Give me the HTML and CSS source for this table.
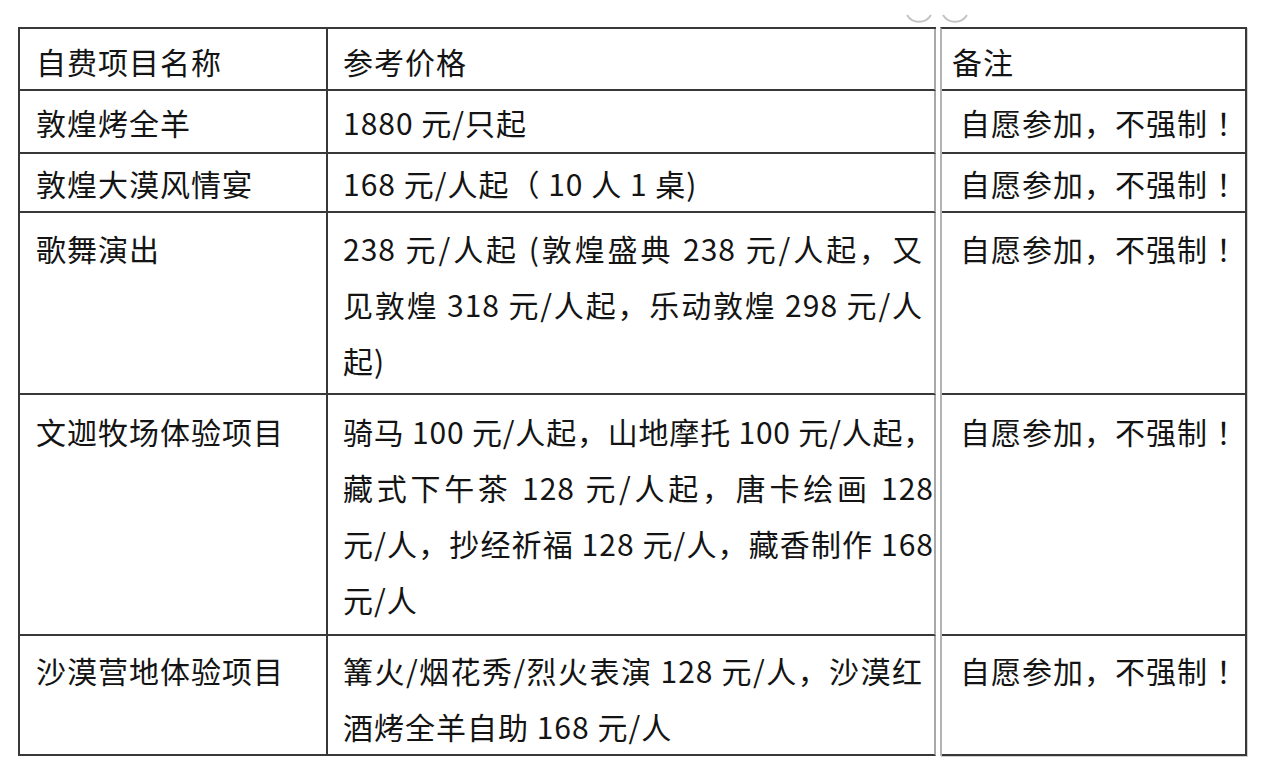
FILE: index.html
```html
<!DOCTYPE html>
<html lang="zh-CN">
<head>
<meta charset="utf-8">
<title>自费项目</title>
<link rel="stylesheet" href="styles.css">
</head>
<body>
<div class="page">
  <svg class="handles" width="80" height="28" viewBox="0 0 80 28" aria-hidden="true">
    <path d="M7 15 A14 14 0 0 0 31 15" />
    <path d="M43 15 A14 14 0 0 0 67 15" />
  </svg>
  <div class="tables">
    <table class="t main">
      <tr class="rh">
        <td class="c1">自费项目名称</td>
        <td class="c2">参考价格</td>
      </tr>
      <tr class="r1">
        <td class="c1">敦煌烤全羊</td>
        <td class="c2">1880 元/只起</td>
      </tr>
      <tr class="r2">
        <td class="c1">敦煌大漠风情宴</td>
        <td class="c2">168 元/人起（ 10 人 1 桌)</td>
      </tr>
      <tr class="r3">
        <td class="c1">歌舞演出</td>
        <td class="c2">
          <span class="ln j">238 元/人起 (敦煌盛典 238 元/人起，又</span>
          <span class="ln j">见敦煌 318 元/人起，乐动敦煌 298 元/人</span>
          <span class="ln">起)</span>
        </td>
      </tr>
      <tr class="r4">
        <td class="c1">文迦牧场体验项目</td>
        <td class="c2">
          <span class="ln j over tight">骑马 100 元/人起，山地摩托 100 元/人起，</span>
          <span class="ln j over">藏式下午茶 128 元/人起，唐卡绘画 128</span>
          <span class="ln j over">元/人，抄经祈福 128 元/人，藏香制作 168</span>
          <span class="ln">元/人</span>
        </td>
      </tr>
      <tr class="r5">
        <td class="c1">沙漠营地体验项目</td>
        <td class="c2">
          <span class="ln j">篝火/烟花秀/烈火表演 128 元/人，沙漠红</span>
          <span class="ln">酒烤全羊自助 168 元/人</span>
        </td>
      </tr>
    </table>
    <table class="t side">
      <tr class="rh"><td class="c3 head">备注</td></tr>
      <tr class="r1"><td class="c3">自愿参加，不强制<span class="bang">！</span></td></tr>
      <tr class="r2"><td class="c3">自愿参加，不强制<span class="bang">！</span></td></tr>
      <tr class="r3"><td class="c3">自愿参加，不强制<span class="bang">！</span></td></tr>
      <tr class="r4"><td class="c3">自愿参加，不强制<span class="bang">！</span></td></tr>
      <tr class="r5"><td class="c3">自愿参加，不强制<span class="bang">！</span></td></tr>
    </table>
  </div>
</div>
</body>
</html>
```

FILE: styles.css
```css
html, body {
  margin: 0;
  padding: 0;
  background: #ffffff;
}

body {
  font-family: "Noto Sans CJK SC", "Noto Sans", sans-serif;
  font-size: 30px;
  letter-spacing: 1px;
  color: #141414;
}

.page {
  position: relative;
  width: 1262px;
  height: 782px;
  overflow: hidden;
}

.handles {
  position: absolute;
  left: 900px;
  top: 0;
  fill: none;
  stroke: #c4c4c4;
  stroke-width: 2;
}

.tables {
  display: flex;
  align-items: flex-start;
  gap: 4px;
  padding: 27px 0 0 18px;
}

.t {
  border-collapse: separate;
  border-spacing: 0;
  table-layout: fixed;
  border-top: 2px solid #383838;
}

.t td {
  box-sizing: border-box;
  vertical-align: top;
  line-height: 56px;
  padding: 4px 0 0 0;
  white-space: nowrap;
  border-bottom: 2px solid #383838;
}

.main {
  width: 918px;
  border-left: 2px solid #383838;
}

.main .c1 {
  width: 308px;
  padding-left: 16px;
  border-right: 2px solid #383838;
}

.main .c2 {
  width: 608px;
  padding-left: 15px;
  padding-right: 11px;
  border-right: 2px solid #a9a9a9;
}

.side {
  width: 307px;
  border-left: 2px solid #b4b4b4;
  box-shadow: 1px 1px 0 #d0d0d0;
}

.side .c3 {
  padding-left: 18px;
  border-right: 2px solid #383838;
}

.side .c3.head {
  padding-left: 10px;
}

.bang {
  padding-left: 8px;
}

.ln {
  display: block;
}

.ln.j {
  text-align: justify;
  text-align-last: justify;
}

.ln.over {
  margin-right: -11px;
  overflow: hidden;
}

.ln.tight {
  letter-spacing: 0.8px;
}

.rh { height: 62px; }
.r1 { height: 63px; }
.r2 { height: 59px; }
.r3 { height: 182px; }
.r4 { height: 241px; }
.r5 { height: 120px; }

.rh td { padding-top: 4px; }
.r1 td { padding-top: 3px; }
.r2 td { padding-top: 1px; }
.r3 td { padding-top: 7px; }
.r4 td { padding-top: 8px; }
.r5 td { padding-top: 6px; }
```
